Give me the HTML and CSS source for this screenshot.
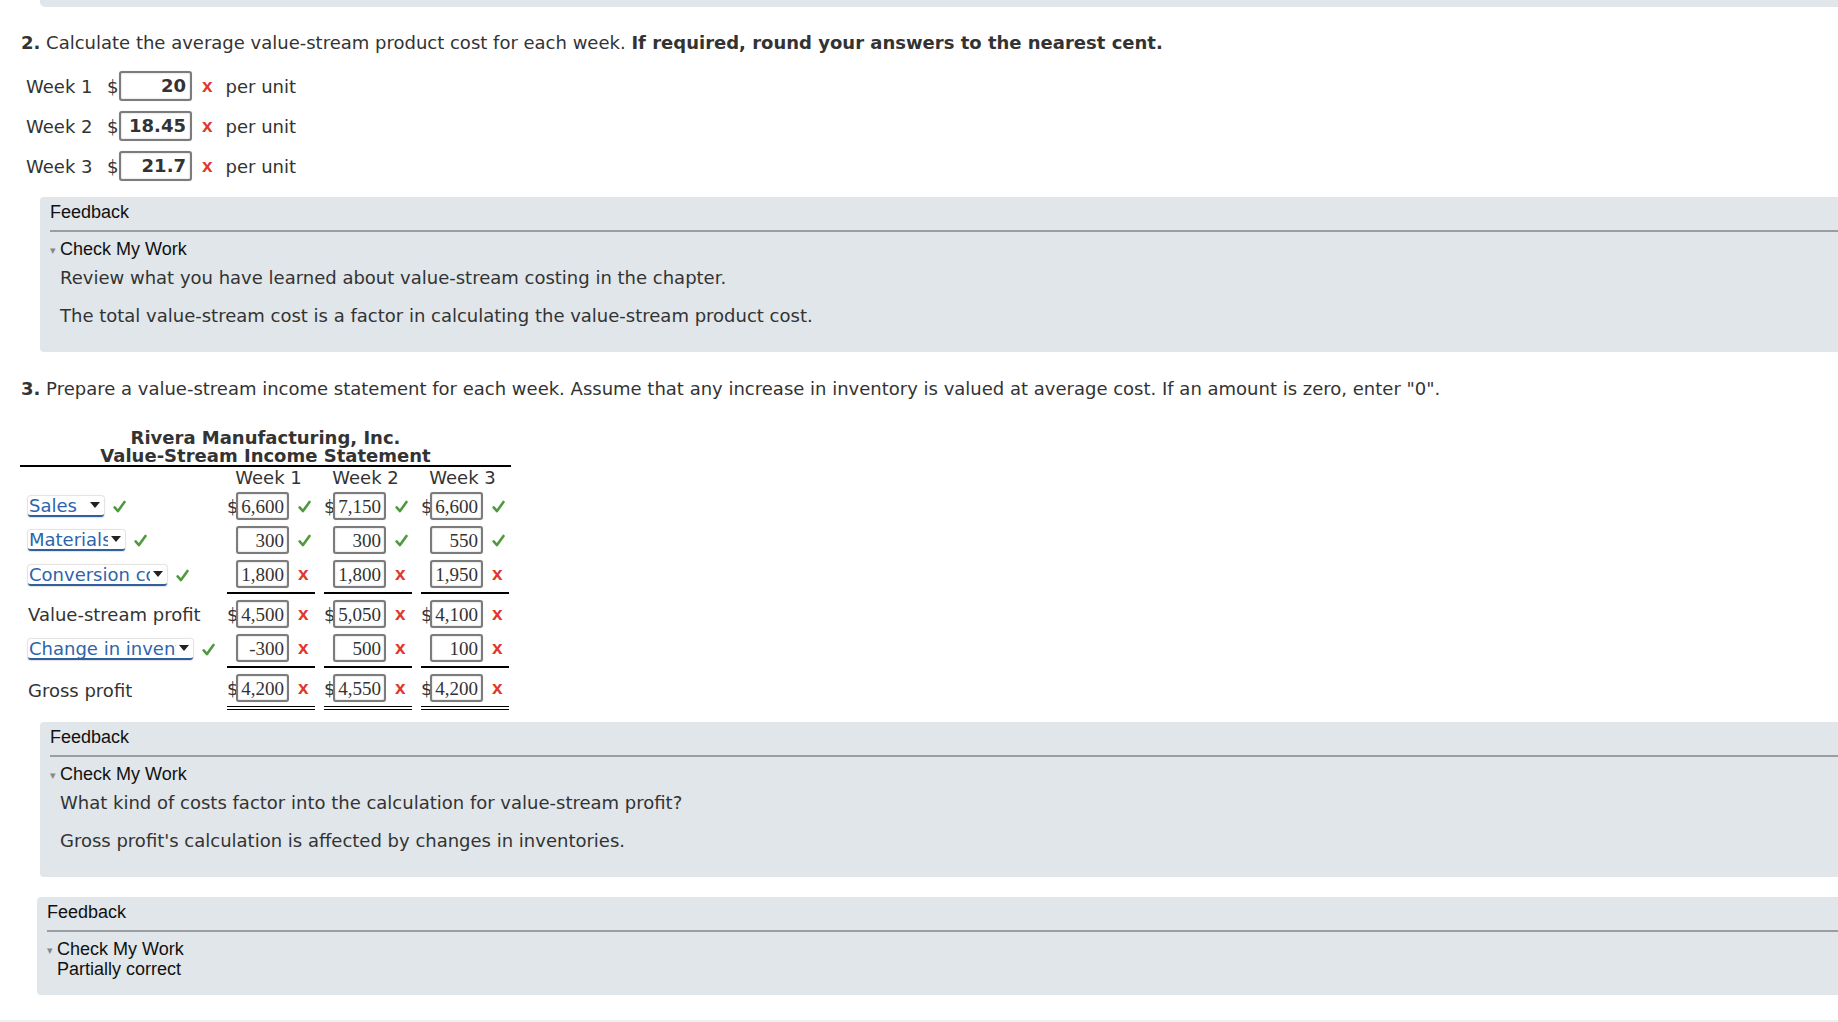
FILE: index.html
```html
<!DOCTYPE html>
<html lang="en">
<head>
<meta charset="utf-8">
<title>Value-stream costing</title>
<link rel="stylesheet" href="styles.css">
</head>
<body>
<div class="topbar"></div>

<p class="prompt p2"><b>2.</b> Calculate the average value-stream product cost for each week. <b>If required, round your answers to the nearest cent.</b></p>

<div class="cost-rows">
  <div class="cost-row"><span class="wk">Week 1</span><span class="usd">$</span><span class="box bold">20</span><span class="mark bad">x</span><span class="unit">per unit</span></div>
  <div class="cost-row"><span class="wk">Week 2</span><span class="usd">$</span><span class="box bold">18.45</span><span class="mark bad">x</span><span class="unit">per unit</span></div>
  <div class="cost-row"><span class="wk">Week 3</span><span class="usd">$</span><span class="box bold">21.7</span><span class="mark bad">x</span><span class="unit">per unit</span></div>
</div>

<div class="feedback">
  <div class="fb-head">Feedback</div>
  <div class="cmw"><span class="tri">&#9662;</span>Check My Work</div>
  <p class="fb-p first">Review what you have learned about value-stream costing in the chapter.</p>
  <p class="fb-p">The total value-stream cost is a factor in calculating the value-stream product cost.</p>
</div>

<p class="prompt p3"><b>3.</b> Prepare a value-stream income statement for each week. Assume that any increase in inventory is valued at average cost. If an amount is zero, enter "0".</p>

<div class="statement">
  <div class="title">Rivera Manufacturing, Inc.<br>Value-Stream Income Statement</div>
  <div class="grid">
    <div class="hd"></div>
    <div class="hd wkh">Week 1</div>
    <div class="hd wkh">Week 2</div>
    <div class="hd wkh">Week 3</div>

    <div class="c lab"><span class="sel w-sales"><span class="sel-t">Sales</span><span class="arr"></span></span><svg class="ck" viewBox="0 0 12 12"><path d="M1.5 6.8 L4.6 10.2 L10.6 1.8"/></svg></div>
    <div class="c num"><span class="usd2">$</span><span class="box serif">6,600</span><svg class="ck" viewBox="0 0 12 12"><path d="M1.5 6.8 L4.6 10.2 L10.6 1.8"/></svg></div>
    <div class="c num"><span class="usd2">$</span><span class="box serif">7,150</span><svg class="ck" viewBox="0 0 12 12"><path d="M1.5 6.8 L4.6 10.2 L10.6 1.8"/></svg></div>
    <div class="c num"><span class="usd2">$</span><span class="box serif">6,600</span><svg class="ck" viewBox="0 0 12 12"><path d="M1.5 6.8 L4.6 10.2 L10.6 1.8"/></svg></div>

    <div class="c lab"><span class="sel w-mat"><span class="sel-t">Materials</span><span class="arr"></span></span><svg class="ck" viewBox="0 0 12 12"><path d="M1.5 6.8 L4.6 10.2 L10.6 1.8"/></svg></div>
    <div class="c num"><span class="usd2"></span><span class="box serif">300</span><svg class="ck" viewBox="0 0 12 12"><path d="M1.5 6.8 L4.6 10.2 L10.6 1.8"/></svg></div>
    <div class="c num"><span class="usd2"></span><span class="box serif">300</span><svg class="ck" viewBox="0 0 12 12"><path d="M1.5 6.8 L4.6 10.2 L10.6 1.8"/></svg></div>
    <div class="c num"><span class="usd2"></span><span class="box serif">550</span><svg class="ck" viewBox="0 0 12 12"><path d="M1.5 6.8 L4.6 10.2 L10.6 1.8"/></svg></div>

    <div class="c lab sub"><span class="sel w-conv"><span class="sel-t">Conversion costs</span><span class="arr"></span></span><svg class="ck" viewBox="0 0 12 12"><path d="M1.5 6.8 L4.6 10.2 L10.6 1.8"/></svg></div>
    <div class="c num sub rule"><span class="usd2"></span><span class="box serif">1,800</span><span class="mark bad">x</span></div>
    <div class="c num sub rule"><span class="usd2"></span><span class="box serif">1,800</span><span class="mark bad">x</span></div>
    <div class="c num sub rule"><span class="usd2"></span><span class="box serif">1,950</span><span class="mark bad">x</span></div>

    <div class="c lab tot">Value-stream profit</div>
    <div class="c num tot"><span class="usd2">$</span><span class="box serif">4,500</span><span class="mark bad">x</span></div>
    <div class="c num tot"><span class="usd2">$</span><span class="box serif">5,050</span><span class="mark bad">x</span></div>
    <div class="c num tot"><span class="usd2">$</span><span class="box serif">4,100</span><span class="mark bad">x</span></div>

    <div class="c lab sub"><span class="sel w-chg"><span class="sel-t">Change in inventory</span><span class="arr"></span></span><svg class="ck" viewBox="0 0 12 12"><path d="M1.5 6.8 L4.6 10.2 L10.6 1.8"/></svg></div>
    <div class="c num sub rule"><span class="usd2"></span><span class="box serif">-300</span><span class="mark bad">x</span></div>
    <div class="c num sub rule"><span class="usd2"></span><span class="box serif">500</span><span class="mark bad">x</span></div>
    <div class="c num sub rule"><span class="usd2"></span><span class="box serif">100</span><span class="mark bad">x</span></div>

    <div class="c lab tot gross">Gross profit</div>
    <div class="c num tot dbl"><span class="usd2">$</span><span class="box serif">4,200</span><span class="mark bad">x</span></div>
    <div class="c num tot dbl"><span class="usd2">$</span><span class="box serif">4,550</span><span class="mark bad">x</span></div>
    <div class="c num tot dbl"><span class="usd2">$</span><span class="box serif">4,200</span><span class="mark bad">x</span></div>
  </div>
</div>

<div class="feedback fb2">
  <div class="fb-head">Feedback</div>
  <div class="cmw"><span class="tri">&#9662;</span>Check My Work</div>
  <p class="fb-p first">What kind of costs factor into the calculation for value-stream profit?</p>
  <p class="fb-p">Gross profit's calculation is affected by changes in inventories.</p>
</div>

<div class="feedback fb3">
  <div class="fb-head">Feedback</div>
  <div class="cmw"><span class="tri">&#9662;</span>Check My Work</div>
  <div class="partial">Partially correct</div>
</div>

<div class="bottom-strip"></div>
</body>
</html>
```

FILE: styles.css
```css
html, body {
  margin: 0;
  padding: 0;
  background: #fff;
}
body {
  font-family: "DejaVu Sans", Verdana, sans-serif;
  font-size: 18px;
  color: #333;
  overflow: hidden;
  height: 1022px;
}

.topbar {
  margin-left: 40px;
  height: 7px;
  background: #e0e6e9;
  border-radius: 0 0 0 5px;
}

.prompt {
  margin: 0;
  padding-left: 21px;
  line-height: 22px;
  white-space: nowrap;
}
.p2 { margin-top: 25px; }
.p3 { margin-top: 26px; }

.cost-rows { margin-top: 12px; }
.cost-row {
  display: flex;
  align-items: center;
  height: 40px;
  padding-left: 26px;
}
.wk { width: 81px; }
.usd { width: 12px; }
.unit { margin-left: 13px; }

.box {
  box-sizing: border-box;
  display: inline-block;
  border: 2px solid #7c7c7c;
  border-radius: 3px;
  background: #fff;
  box-shadow: inset 0 0 2px rgba(0,0,0,0.25), 0 0 1px rgba(0,0,0,0.2);
  text-align: right;
  color: #333;
  flex: none;
}
.cost-row .box {
  width: 73px;
  height: 30px;
  line-height: 26px;
  padding-right: 4px;
}
.bold { font-weight: bold; }

.mark {
  font-family: "Liberation Sans", Arial, sans-serif;
  font-weight: bold;
  font-size: 19px;
  line-height: 18px;
}
.bad { color: #e3352a; }
.cost-row .mark { margin-left: 10px; }

.feedback {
  margin-left: 40px;
  margin-right: -10px;
  background: #e0e6e9;
  border-radius: 4px;
  padding: 3px 0 25px 10px;
  font-family: "Liberation Sans", Arial, sans-serif;
  color: #111;
  margin-top: 11px;
}
.fb-head {
  font-size: 18px;
  line-height: 24px;
  padding-bottom: 6px;
  border-bottom: 2px solid #9a9ea1;
}
.cmw {
  margin-top: 7px;
  font-size: 18px;
  line-height: 20px;
  display: flex;
  align-items: center;
}
.tri {
  display: inline-block;
  width: 10px;
  font-size: 11px;
  line-height: 11px;
  color: #888;
  margin-top: 2px;
}
.fb-p {
  margin: 16px 0 0 10px;
  font-family: "DejaVu Sans", Verdana, sans-serif;
  font-size: 18px;
  line-height: 22px;
  color: #333;
}
.fb-p.first { margin-top: 8px; }

.fb2 { margin-top: 12px; }
.fb3 {
  margin-top: 20px;
  margin-left: 37px;
  padding-bottom: 16px;
}
.partial {
  padding-left: 10px;
  font-size: 18px;
  line-height: 20px;
}

.statement {
  margin: 29px 0 0 20px;
  width: 491px;
}
.title {
  text-align: center;
  font-weight: bold;
  line-height: 18px;
  border-bottom: 2px solid #000;
}
.grid {
  display: grid;
  grid-template-columns: 198px 88px 88px 88px;
  column-gap: 9px;
}
.hd {
  height: 22px;
  line-height: 22px;
}
.wkh {
  text-align: center;
  padding-right: 5px;
  white-space: nowrap;
}
.c {
  display: flex;
  align-items: center;
  padding: 3px 0;
  white-space: nowrap;
}
.c.sub { padding-bottom: 4px; }
.c.rule { border-bottom: 2px solid #000; }
.c.tot { padding-top: 6px; }
.c.dbl {
  padding-bottom: 4px;
  border-bottom: 4px double #000;
}
.lab { padding-left: 8px; }
.gross { padding-top: 10px; }

.usd2 {
  width: 9px;
  min-width: 0;
  flex: none;
  overflow: visible;
  white-space: nowrap;
}
.grid .box {
  width: 53px;
  height: 28px;
  line-height: 25px;
  padding-right: 3px;
}
.serif {
  font-family: "Liberation Serif", "Times New Roman", serif;
  font-size: 19px;
}
.num .ck, .num .mark { margin-left: 9px; }

.ck {
  width: 13px;
  height: 13px;
  flex: none;
}
.ck path {
  fill: none;
  stroke: #4f9a3e;
  stroke-width: 2.4;
  stroke-linecap: round;
  stroke-linejoin: round;
}
.lab .ck { margin-left: 9px; }

.sel {
  box-sizing: border-box;
  display: inline-flex;
  align-items: center;
  flex: none;
  height: 21px;
  background: #fff;
  border-radius: 3px;
  box-shadow: 0 0 1px 1px rgba(0,0,0,0.12);
  border-bottom: 2px solid #2f5f9c;
  color: #2d64ab;
  overflow: hidden;
  padding-left: 1px;
}
.sel-t {
  flex: 1;
  min-width: 0;
  overflow: hidden;
  white-space: nowrap;
  line-height: 19px;
}
.arr {
  flex: none;
  width: 0;
  height: 0;
  border-left: 5px solid transparent;
  border-right: 5px solid transparent;
  border-top: 6px solid #222;
  margin: 0 4px 0 3px;
}
.w-sales { width: 76px; }
.w-mat { width: 97px; }
.w-conv { width: 139px; }
.w-chg { width: 165px; }

.bottom-strip {
  position: absolute;
  left: 0;
  right: 0;
  top: 1020px;
  height: 2px;
  background: #eef1f3;
}
```
